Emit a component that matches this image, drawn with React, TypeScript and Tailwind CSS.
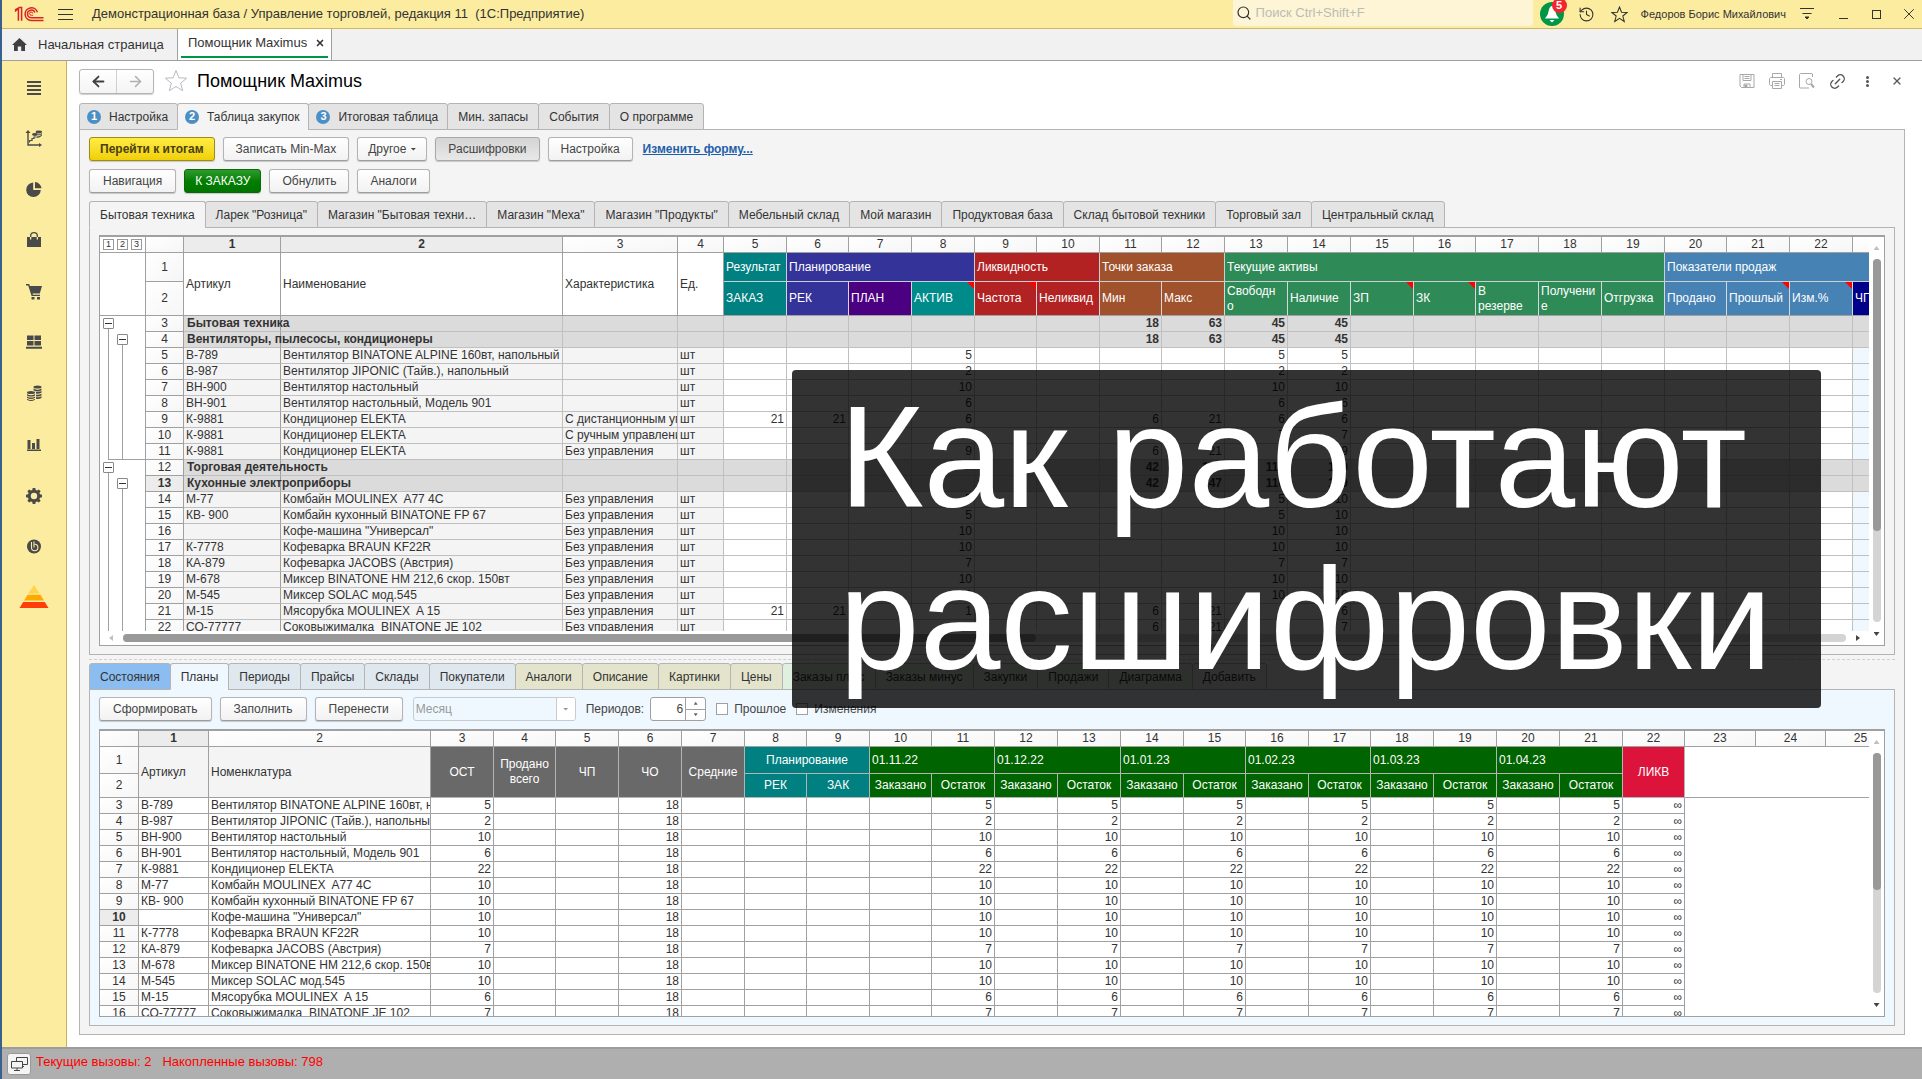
import React from 'react';
import { ArrowLeft, ArrowRight, History, Link2, Search, Star, X } from 'lucide-react';
import clsx from 'clsx';

const mainTabs = [
  { title: 'Настройка', num: 1 },
  { title: 'Таблица закупок', num: 2, active: true },
  { title: 'Итоговая таблица', num: 3 },
  { title: 'Мин. запасы' },
  { title: 'События' },
  { title: 'О программе' },
];

const storeTabs = [
  'Бытовая техника',
  'Ларек "Розница"',
  'Магазин "Бытовая техни…',
  'Магазин "Меха"',
  'Магазин "Продукты"',
  'Мебельный склад',
  'Мой магазин',
  'Продуктовая база',
  'Склад бытовой техники',
  'Торговый зал',
  'Центральный склад',
];

const detailTabs = [
  { title: 'Состояния', color: 'bg-[#8bbdf0]' },
  { title: 'Планы', color: 'bg-[#eff7ff]', active: true },
  { title: 'Периоды', color: 'bg-[#dfe7ef]' },
  { title: 'Прайсы', color: 'bg-[#dfe7ef]' },
  { title: 'Склады', color: 'bg-[#dfe7ef]' },
  { title: 'Покупатели', color: 'bg-[#dfe7ef]' },
  { title: 'Аналоги', color: 'bg-[#e4e4cc]' },
  { title: 'Описание', color: 'bg-[#e4e4cc]' },
  { title: 'Картинки', color: 'bg-[#e4e4cc]' },
  { title: 'Цены', color: 'bg-[#e4e4cc]' },
  { title: 'Заказы плюс', color: 'bg-[#e0f0e0]' },
  { title: 'Заказы минус', color: 'bg-[#e0f0e0]' },
  { title: 'Закупки', color: 'bg-[#e0f0e0]' },
  { title: 'Продажи', color: 'bg-[#e0f0e0]' },
  { title: 'Диаграмма', color: 'bg-[#e0f0e0]' },
  { title: 'Добавить', color: 'bg-[#f0f0f0]' },
];

// widths of spreadsheet columns, row number column first
const orderCols = [38, 97, 282, 115, 46, 63, 62, 63, 63, 62, 63, 62, 63, 63, 63, 63, 62, 63, 63, 63, 62, 63, 63, 63];
const planCols = [39, 70, 222, 63, 62, 63, 63, 63, 62, 63, 62, 63, 63, 63, 63, 62, 63, 62, 63, 63, 63, 63, 62, 71, 70, 70];

const orderGroups = [
  { title: 'Результат', span: 1, color: 'bg-[#008080]' },
  { title: 'Планирование', span: 3, color: 'bg-[#333399]' },
  { title: 'Ликвидность', span: 2, color: 'bg-[#b22222]' },
  { title: 'Точки заказа', span: 2, color: 'bg-[#a0522d]' },
  { title: 'Текущие активы', span: 7, color: 'bg-[#2e8b57]' },
  { title: 'Показатели продаж', span: 4, color: 'bg-[#4682b4]' },
];

const orderHeads = [
  { title: 'ЗАКАЗ', color: 'bg-[#008080]' },
  { title: 'РЕК', color: 'bg-[#333399]' },
  { title: 'ПЛАН', color: 'bg-[#4b0082]' },
  { title: 'АКТИВ', color: 'bg-[#008b8b]', note: true },
  { title: 'Частота', color: 'bg-[#b22222]', note: true },
  { title: 'Неликвид', color: 'bg-[#b22222]' },
  { title: 'Мин', color: 'bg-[#a0522d]' },
  { title: 'Макс', color: 'bg-[#a0522d]' },
  { title: 'Свободн\nо', color: 'bg-[#2e8b57]' },
  { title: 'Наличие', color: 'bg-[#2e8b57]' },
  { title: 'ЗП', color: 'bg-[#2e8b57]', note: true },
  { title: 'ЗК', color: 'bg-[#2e8b57]', note: true },
  { title: 'В\nрезерве', color: 'bg-[#2e8b57]' },
  { title: 'Получени\nе', color: 'bg-[#2e8b57]' },
  { title: 'Отгрузка', color: 'bg-[#2e8b57]' },
  { title: 'Продано', color: 'bg-[#4682b4]' },
  { title: 'Прошлый', color: 'bg-[#4682b4]', note: true },
  { title: 'Изм.%', color: 'bg-[#4682b4]', note: true },
  { title: 'ЧП', color: 'bg-[#00008b]' },
];

type OrderRow = {
  group?: boolean;
  outline: string;
  text: string[];
  values: Record<number, number>;
};

const item = (text: string[], values: Record<number, number>, outline = 'll'): OrderRow => ({ outline, text, values });

const orderRows: OrderRow[] = [
  { group: true, outline: 'b', text: ['Бытовая техника'], values: { 11: 18, 12: 63, 13: 45, 14: 45 } },
  { group: true, outline: 'lb', text: ['Вентиляторы, пылесосы, кондиционеры'], values: { 11: 18, 12: 63, 13: 45, 14: 45 } },
  item(['B-789', 'Вентилятор BINATONE ALPINE 160вт, напольный', '', 'шт'], { 8: 5, 13: 5, 14: 5 }),
  item(['B-987', 'Вентилятор JIPONIC (Тайв.), напольный', '', 'шт'], { 8: 2, 13: 2, 14: 2 }),
  item(['ВН-900', 'Вентилятор настольный', '', 'шт'], { 8: 10, 13: 10, 14: 10 }),
  item(['ВН-901', 'Вентилятор настольный, Модель 901', '', 'шт'], { 8: 6, 13: 6, 14: 6 }),
  item(['К-9881', 'Кондиционер ELEKTA', 'С дистанционным управлением', 'шт'], { 5: 21, 6: 21, 8: 6, 11: 6, 12: 21, 13: 6, 14: 6 }),
  item(['К-9881', 'Кондиционер ELEKTA', 'С ручным управлением', 'шт'], { 8: 7, 11: 6, 12: 21, 13: 7, 14: 7 }),
  item(['К-9881', 'Кондиционер ELEKTA', 'Без управления', 'шт'], { 8: 9, 11: 6, 12: 21, 13: 9, 14: 9 }, 'lle'),
  { group: true, outline: 'b', text: ['Торговая деятельность'], values: { 11: 42, 12: 147, 13: 110, 14: 160 } },
  { group: true, outline: 'lb', text: ['Кухонные электроприборы'], values: { 11: 42, 12: 147, 13: 110, 14: 160 } },
  item(['М-77', 'Комбайн MOULINEX  A77 4C', 'Без управления', 'шт'], { 8: 5, 13: 5, 14: 10 }),
  item(['КВ- 900', 'Комбайн кухонный BINATONE FP 67', 'Без управления', 'шт'], { 8: 5, 13: 5, 14: 10 }),
  item(['', 'Кофе-машина "Универсал"', 'Без управления', 'шт'], { 8: 10, 13: 10, 14: 10 }),
  item(['К-7778', 'Кофеварка BRAUN KF22R', 'Без управления', 'шт'], { 8: 10, 13: 10, 14: 10 }),
  item(['КА-879', 'Кофеварка JACOBS (Австрия)', 'Без управления', 'шт'], { 8: 7, 13: 7, 14: 7 }),
  item(['М-678', 'Миксер BINATONE HM 212,6 скор. 150вт', 'Без управления', 'шт'], { 8: 10, 13: 10, 14: 10 }),
  item(['М-545', 'Миксер SOLAC мод.545', 'Без управления', 'шт'], { 8: 10, 13: 10, 14: 10 }),
  item(['М-15', 'Мясорубка MOULINEX  A 15', 'Без управления', 'шт'], { 5: 21, 6: 21, 8: 1, 11: 6, 12: 21, 13: 1, 14: 6 }),
  item(['СО-77777', 'Соковыжималка  BINATONE JE 102', 'Без управления', 'шт'], { 8: 7, 11: 6, 12: 21, 13: 7, 14: 7 }),
];

const planRows: [string, string, number][] = [
  ['B-789', 'Вентилятор BINATONE ALPINE 160вт, напольный', 5],
  ['B-987', 'Вентилятор JIPONIC (Тайв.), напольный', 2],
  ['ВН-900', 'Вентилятор настольный', 10],
  ['ВН-901', 'Вентилятор настольный, Модель 901', 6],
  ['К-9881', 'Кондиционер ELEKTA', 22],
  ['М-77', 'Комбайн MOULINEX  A77 4C', 10],
  ['КВ- 900', 'Комбайн кухонный BINATONE FP 67', 10],
  ['', 'Кофе-машина "Универсал"', 10],
  ['К-7778', 'Кофеварка BRAUN KF22R', 10],
  ['КА-879', 'Кофеварка JACOBS (Австрия)', 7],
  ['М-678', 'Миксер BINATONE HM 212,6 скор. 150вт', 10],
  ['М-545', 'Миксер SOLAC мод.545', 10],
  ['М-15', 'Мясорубка MOULINEX  A 15', 6],
  ['СО-77777', 'Соковыжималка  BINATONE JE 102', 7],
];

const planDates = ['01.11.22', '01.12.22', '01.01.23', '01.02.23', '01.03.23', '01.04.23'];

const sum = (list: number[]) => list.reduce((a, b) => a + b, 0);

type ButtonProps = { children: React.ReactNode; look?: string; pad?: string };

const Button = ({
  children,
  look = 'border-[#b4b4b4] border-b-[#9c9c9c] bg-linear-to-b from-white to-[#f2f2f2] text-[#444]',
  pad = 'px-3',
}: ButtonProps) => (
  <button type="button" className={clsx('flex h-6 items-center rounded-[3px] border text-xs whitespace-nowrap shadow-[0_1px_1px_#00000030]', look, pad)}>
    {children}
  </button>
);

type TabProps = { title: string; num?: number; active?: boolean; color?: string };

const Tab = ({ title, num, active, color }: TabProps) => (
  <button
    type="button"
    role="tab"
    aria-selected={!!active}
    className={clsx(
      'relative -mr-px flex h-[27px] items-center rounded-t-[3px] border border-[#b4b4b4] text-xs whitespace-nowrap text-[#333]',
      num ? 'gap-2 pr-[9px] pl-[7px]' : 'px-[10px]',
      active && 'border-b-transparent',
      color ?? (active ? 'bg-[#f4f4f4]' : 'bg-[#e4e4e4]'),
    )}
  >
    {num && <span className="flex size-[14px] items-center justify-center rounded-full bg-[#4b90c4] text-[11px] leading-none font-bold text-white">{num}</span>}
    {title}
  </button>
);

const Logo = () => (
  <svg width="30" height="16" viewBox="0 0 30 16" fill="none" stroke="#dd2127" strokeWidth="1.5" aria-label="1С">
    <path d="M1 5.500 4.400 2.200v12.600M7.600 14.800V1.600H5.600L1 4" />
    <path d="M23.400 6.200A6.300 6.300 0 1 0 17.200 14.400H29.500" />
    <path d="M20.900 6.600A3.800 3.800 0 1 0 17.200 11.700H29.500" />
    <path d="M18.800 7.400a1.600 1.600 0 1 0-1.600 1.800h2" strokeWidth="1" />
  </svg>
);

const sideIcons = [
  <path key="0" d="M3 4h14v2H3zM3 8h14v2H3zM3 12h14v2H3zM3 16h14v2H3z" />,
  <g key="1">
    <path d="M4 2l2.500 3H4.700v11.300H15V15l3 2-3 2v-1.300H3.300V5h-1.800z" />
    <path d="M5.500 14.500v-2H8v-2h2V9h2" fill="none" stroke="#4a4a4a" strokeWidth="1.200" />
    <ellipse cx="14.800" cy="4" rx="3.200" ry="1.400" />
    <ellipse cx="11" cy="6.500" rx="3" ry="1.400" />
    <path d="M12.500 8.500q4 0 5.500-2.500v1.500q-1.500 2.300-5.500 2.500zM14 6.500q2.500-.3 4-1.500v.8q-1.500 1.500-4 1.700z" />
  </g>,
  <path key="2" d="M9.200 3.500v7.600h7.600A7.300 7.300 0 1 1 9.200 3.500zM11 3a7 7 0 0 1 6.500 6.300H11z" />,
  <path key="3" fillRule="evenodd" d="M3 7h14v10H3zM6 9.500V6a4 4 0 0 1 8 0v3.500h-1.300V6a2.700 2.700 0 0 0-5.400 0v3.500z" />,
  <path key="4" d="M2 3h3.200l.7 2H18l-2.200 7.500H8.500l.4 1.200H16V15H7.600L4.200 4.500H2zM7.500 16h3v2.500h-3zM13 16h3v2.500h-3z" />,
  <path key="5" d="M3 3.500h6.500V8H3zM10.500 3.500H17V8h-6.500zM3 9h6.500v4.500H3zM10.500 9H17v4.500h-6.500zM2 14.800h16v2H2z" />,
  <g key="6">
    <ellipse cx="13.500" cy="4" rx="4" ry="1.500" />
    <path d="M9.500 5.500q4 2.400 8 0v1.700q-4 2.400-8 0zM12 8.900q3 .6 5.500-.8v1.700q-3 1.500-5.500.8zM12 11.500q3 .6 5.500-.8v1.700q-3 1.500-5.500.8zM12 14.100q3 .6 5.500-.8V15q-3 1.500-5.500.8z" />
    <ellipse cx="7" cy="9.500" rx="4" ry="1.500" />
    <path d="M3 11q4 2.400 8 0v1.400q-4 2.400-8 0zM3 13.400q4 2.400 8 0v1.400q-4 2.400-8 0zM3 15.800q4 2.400 8 0v.9q-4 2.400-8 0z" />
  </g>,
  <path key="7" d="M3.500 6h3v9h-3zM8 9h3v6H8zM12.500 5h3v10h-3zM3 15.500h14V17H3z" />,
  <path key="8" fillRule="evenodd" d="M8.700 3h2.600l.4 2 1.400.6 1.700-1.200 1.800 1.800-1.200 1.700.6 1.400 2 .4v2.600l-2 .4-.6 1.400 1.200 1.700-1.800 1.800-1.700-1.200-1.400.6-.4 2H8.700l-.4-2-1.400-.6-1.700 1.200-1.800-1.800 1.200-1.700-.6-1.400-2-.4V9.700l2-.4.6-1.400-1.200-1.700 1.800-1.800 1.700 1.200L8.300 5zM10 7.800a3.200 3.200 0 1 0 0 6.400 3.200 3.200 0 0 0 0-6.400z" />,
  <g key="9">
    <circle cx="10" cy="10.500" r="7" />
    <path d="M7.500 6v5.500a3.200 3.200 0 1 0 3.200-3.200M10 5.500v6" fill="none" stroke="#fbec9f" strokeWidth="1.100" />
  </g>,
];

const SideBar = () => (
  <nav className="flex w-[65px] shrink-0 flex-col border-r border-[#c6b35c] bg-[#fbec9f]">
    {sideIcons.map((icon, i) => (
      <a key={i} href="#" className="flex h-[51px] items-center justify-center">
        <svg width="20" height="20" viewBox="0 0 20 20" fill="#4a4a4a">{icon}</svg>
      </a>
    ))}
    <a href="#" className="flex h-[51px] items-center justify-center">
      <svg width="30" height="24" viewBox="0 0 30 24">
        <path d="M15 0l5.600 8.500H9.400z" fill="#ffd34d" />
        <path d="M8.600 9.800h12.800l3.600 5.600H5z" fill="#ffa800" />
        <path d="M4.200 17h21.600L29.500 23H.5z" fill="#ff3d0a" />
      </svg>
    </a>
  </nav>
);

const TitleBar = () => (
  <header className="flex h-[29px] shrink-0 items-center border-b border-[#cdb765] bg-[#fbec9f] text-[#333]">
    <div className="ml-3 flex items-center gap-[14px]">
      <Logo />
      <button type="button" aria-label="Меню" className="flex w-[15px] flex-col gap-1">
        <span className="h-px bg-[#333]" />
        <span className="h-px bg-[#333]" />
        <span className="h-px bg-[#333]" />
      </button>
    </div>
    <h1 className="ml-[19px] text-[13px] whitespace-pre">Демонстрационная база / Управление торговлей, редакция 11  (1С:Предприятие)</h1>
    <label className="mr-[7px] mb-[2px] ml-auto flex h-[26px] w-[300px] items-center gap-1 rounded-b-[3px] bg-[#fdf5d6] pl-[3px]">
      <Search size={16} strokeWidth={1.800} />
      <input type="text" aria-label="Поиск" placeholder="Поиск Ctrl+Shift+F" className="w-60 bg-transparent text-[13px] outline-none placeholder:text-[#bcbcb4]" />
    </label>
    <button type="button" aria-label="Уведомления" className="relative mr-[11px] size-6">
      <svg width="24" height="24" viewBox="0 0 24 24">
        <circle cx="12" cy="12" r="12" fill="#009646" />
        <path d="M12 4c-2.500 0-3 4-4 7.500-.6 2-2 3.500-3 5h14c-1-1.500-2.400-3-3-5C15 8 14.500 4 12 4zM9.500 18h5L12 20.500z" fill="#fff" />
      </svg>
      <span className="absolute -top-1 -right-[3px] flex size-[15px] items-center justify-center rounded-full bg-[#f5242c] text-[11px] leading-none font-bold text-white">5</span>
    </button>
    <button type="button" aria-label="История" className="mr-[9px] flex size-6 items-center justify-center"><History size={17} strokeWidth={1.500} /></button>
    <button type="button" aria-label="Избранное" className="mr-[9px] flex size-6 items-center justify-center">
      <svg width="17" height="17" viewBox="0 0 24 24" fill="none" stroke="#333" strokeWidth="1.500"><path d="M12 1.500l2.900 7.300 7.800.4-6 5 2 7.600L12 17.500l-6.700 4.300 2-7.600-6-5 7.800-.4z" /></svg>
    </button>
    <a href="#" className="mr-[9px] text-[11px] whitespace-nowrap">Федоров Борис Михайлович</a>
    <button type="button" aria-label="Настройки" className="mr-3 flex size-6 items-center justify-center">
      <svg width="16" height="14" viewBox="0 0 16 14" fill="none" stroke="#333"><path d="M1 1.500h14M3.500 6.500h9" /><path d="M6 10h4L8 12z" fill="#333" /></svg>
    </button>
    <div className="flex gap-[9px] pr-px">
      <button type="button" aria-label="Свернуть" className="flex size-6 items-center justify-center"><span className="mt-2 h-px w-[9px] bg-[#333]" /></button>
      <button type="button" aria-label="Развернуть" className="flex size-6 items-center justify-center"><span className="size-[9px] border border-[#333]" /></button>
      <button type="button" aria-label="Закрыть" className="flex size-6 items-center justify-center"><X size={18} strokeWidth={1.300} /></button>
    </div>
  </header>
);

const WindowTabs = () => (
  <div className="flex h-8 shrink-0 border-b border-[#a0a0a0] bg-[#f1f1f1] text-[13px] text-[#333]">
    <a href="#" className="flex w-[175px] items-center gap-[11px] pl-[10px]">
      <svg width="15" height="13" viewBox="0 0 15 13" fill="#404040"><path d="M7.500 0 15 7h-2v6H9.200V8.500H5.800V13H2V7H0z" /></svg>
      Начальная страница
    </a>
    <div className="flex w-[155px] flex-col border-x border-[#a0a0a0] bg-white px-[3px]">
      <div className="flex flex-1 items-center justify-between pt-px pr-[3px] pl-[7px]">
        Помощник Maximus
        <button type="button" aria-label="Закрыть вкладку"><X size={10} strokeWidth={4} /></button>
      </div>
      <div className="mb-[2px] h-[2px] bg-[#009646]" />
    </div>
  </div>
);

const FormHeader = () => (
  <div className="flex h-6 items-center">
    <div className="flex h-[25px] w-[75px] rounded-[3px] border border-[#b4b4b4] bg-linear-to-b from-white to-[#f4f4f4] shadow-[0_1px_1px_#00000030]">
      <button type="button" aria-label="Назад" className="flex flex-1 items-center justify-center border-r border-[#d0d0d0]"><ArrowLeft size={17} strokeWidth={2.600} color="#404040" /></button>
      <button type="button" aria-label="Вперед" className="flex flex-1 items-center justify-center"><ArrowRight size={17} strokeWidth={2.300} color="#b0b0b0" /></button>
    </div>
    <button type="button" aria-label="В избранное" className="ml-[10px]">
      <svg width="24" height="24" viewBox="0 0 24 24" fill="none" stroke="#b4bcc4"><path d="M12 1.500l2.900 7.300 7.800.4-6 5 2 7.600L12 17.500l-6.700 4.300 2-7.600-6-5 7.800-.4z" /></svg>
    </button>
    <h2 className="ml-[9px] text-lg text-black">Помощник Maximus</h2>
    <div className="mr-[13px] ml-auto flex items-center gap-[6px]">
      <button type="button" aria-label="Сохранить" className="flex size-6 items-center justify-center">
        <svg width="16" height="16" viewBox="0 0 16 16" fill="none" stroke="#a8a8a8"><path d="M1 1.500h14v13H2.500L1 13zM4 1.500v6h8v-6M5.500 3.500h5M5.500 5.500h5M5 14.500v-3.500h6v3.500" /><path d="M6 12h2v2.500H6z" fill="#a8a8a8" /></svg>
      </button>
      <button type="button" aria-label="Печать" className="flex size-6 items-center justify-center">
        <svg width="16" height="16" viewBox="0 0 16 16" fill="none" stroke="#a8a8a8"><path d="M3.500 4.500v-4h9v4M3.500 12.500h-2l-1-1v-6l1-1h13l1 1v6l-1 1h-2M3.500 8.500h9v7h-9zM5.500 10.500h5M5.500 12.500h5M11 6.500h2" /></svg>
      </button>
      <button type="button" aria-label="Просмотр" className="flex size-6 items-center justify-center">
        <svg width="16" height="16" viewBox="0 0 16 16" fill="none" stroke="#a8a8a8"><path d="M13.500 4V1l-.5-.5H1.500l-1 1v13l.5.5H10" /><circle cx="10" cy="8.500" r="3" /><path d="M12 11l3 3.500" strokeWidth="2" /></svg>
      </button>
      <button type="button" aria-label="Ссылка" className="flex size-6 items-center justify-center"><Link2 size={19} strokeWidth={1.700} color="#555" className="-rotate-45" /></button>
      <button type="button" aria-label="Еще" className="flex size-6 flex-col items-center justify-center gap-px">
        <span className="size-[3px] rounded-full bg-[#555]" />
        <span className="size-[3px] rounded-full bg-[#555]" />
        <span className="size-[3px] rounded-full bg-[#555]" />
      </button>
      <button type="button" aria-label="Закрыть форму" className="flex size-6 items-center justify-center"><X size={12} strokeWidth={2.400} color="#555" /></button>
    </div>
  </div>
);

const Columns = ({ widths }: { widths: number[] }) => (
  <colgroup>
    {widths.map((w, i) => (
      <col key={i} style={{ width: w }} />
    ))}
  </colgroup>
);

const gutter = 'border-r border-b border-[#a0a0a0] bg-linear-to-br from-white to-[#f6f6f6] p-0 text-center font-normal';
const marked = 'border-r border-b border-[#a0a0a0] bg-[#ececec] p-0 text-center font-bold';

const ColumnNumbers = ({ count, active }: { count: number; active: number[] }) => (
  <>
    <th className={clsx(gutter, 'h-[15px]')} />
    {Array.from({ length: count }, (_, i) => (
      <th key={i} scope="col" className={active.includes(i + 1) ? marked : gutter}>{i + 1}</th>
    ))}
  </>
);

const Fold = () => (
  <button type="button" aria-label="Свернуть группу" className="mt-[2px] flex size-[11px] shrink-0 items-center justify-center rounded-[1px] border border-[#888] bg-white">
    <span className="h-px w-[7px] bg-[#333]" />
  </button>
);

const Outline = ({ kind }: { kind: string }) => (
  <td className="relative border-r border-[#a0a0a0] bg-white p-0 pl-px">
    <div className="flex h-4">
      {kind.replace('e', '').split('').map((mark, i) => (
        <div key={i} className="flex w-[14px] flex-col items-center">
          {mark === 'b' && <Fold />}
          <span className="w-px flex-1 bg-[#a0a0a0]" />
        </div>
      ))}
    </div>
    {kind.endsWith('e') && <span className="absolute right-0 bottom-0 left-2 h-px bg-[#a0a0a0]" />}
  </td>
);

const OrderTable = () => (
  <table className="table-fixed border-separate border-spacing-0 text-xs leading-[15px] text-[#333]" style={{ width: 46 + sum(orderCols) }}>
    <Columns widths={[46, ...orderCols]} />
    <thead>
      <tr>
        <td className="border-r border-b border-[#a0a0a0] bg-white p-0 pl-[3px]">
          <div className="flex gap-[3px]">
            {[1, 2, 3].map((n) => (
              <button key={n} type="button" className="flex size-[11px] items-center justify-center border border-[#999] text-[9px] leading-none">{n}</button>
            ))}
          </div>
        </td>
        <ColumnNumbers count={23} active={[1, 2]} />
      </tr>
      <tr>
        <td rowSpan={2} className="border-r border-b border-[#a0a0a0] bg-white p-0" />
        <th scope="row" className={clsx(gutter, 'h-[29px]')}>1</th>
        {['Артикул', 'Наименование', 'Характеристика', 'Ед.'].map((title) => (
          <th key={title} rowSpan={2} scope="col" className="border-r border-b border-[#a0a0a0] bg-white p-0 pl-[2px] text-left font-normal">{title}</th>
        ))}
        {orderGroups.map((g) => (
          <th key={g.title} colSpan={g.span} scope="colgroup" className={clsx('border-r border-b border-[#c8d0d4] p-0 pl-[2px] text-left font-normal text-white', g.color)}>{g.title}</th>
        ))}
      </tr>
      <tr>
        <th scope="row" className={clsx(gutter, 'h-[34px]')}>2</th>
        {orderHeads.map((h) => (
          <th key={h.title} scope="col" className={clsx('relative border-r border-b border-r-[#d8d8d8] border-b-[#a0a0a0] p-0 pl-[2px] text-left font-normal whitespace-pre text-white', h.color)}>
            {h.title}
            {h.note && <span className="absolute top-0 right-0 size-[7px] bg-[#ff0000] [clip-path:polygon(0_0,100%_0,100%_100%)]" />}
          </th>
        ))}
      </tr>
    </thead>
    <tbody>
      {orderRows.map((row, r) => (
        <tr key={r}>
          <Outline kind={row.outline} />
          <th scope="row" className={clsx(r === 10 ? marked : gutter, 'h-4')}>{r + 3}</th>
          {[0, 1, 2, 3].map((c) => (
            <td
              key={c}
              className={clsx(
                'border-r border-b border-[#c0c0c0] p-0 whitespace-pre',
                row.group ? 'bg-[#dbdbdb] pl-[3px] font-bold' : 'overflow-hidden bg-[#f4f4f4] pl-[2px]',
                c === 0 && 'border-r-[#a0a0a0]',
              )}
            >
              {row.text[c]}
            </td>
          ))}
          {orderHeads.map((_, c) => (
            <td
              key={c}
              className={clsx(
                'border-r border-b border-[#c0c0c0] p-0 pr-[2px] text-right',
                row.group ? 'bg-[#dbdbdb] font-bold' : c === 18 ? 'bg-[#eff7ff]' : 'bg-white',
              )}
            >
              {row.values[c + 5]}
            </td>
          ))}
        </tr>
      ))}
    </tbody>
  </table>
);

const planHead = 'border-r border-b border-[#b4b4b4] p-0 font-normal text-white';

const PlanTable = () => (
  <table className="table-fixed border-separate border-spacing-0 text-xs leading-[15px] text-[#333]" style={{ width: sum(planCols) }}>
    <Columns widths={planCols} />
    <thead>
      <tr>
        <ColumnNumbers count={25} active={[1]} />
      </tr>
      <tr>
        <th scope="row" className={clsx(gutter, 'h-[27px]')}>1</th>
        {['Артикул', 'Номенклатура'].map((title) => (
          <th key={title} rowSpan={2} scope="col" className="border-r border-b border-[#a0a0a0] bg-[#f4f4f4] p-0 pl-[2px] text-left font-normal">{title}</th>
        ))}
        {['ОСТ', 'Продано\nвсего', 'ЧП', 'ЧО', 'Средние'].map((title) => (
          <th key={title} rowSpan={2} scope="col" className={clsx(planHead, 'bg-[#696969] text-center whitespace-pre')}>{title}</th>
        ))}
        <th colSpan={2} scope="colgroup" className={clsx(planHead, 'bg-[#008080] text-center')}>Планирование</th>
        {planDates.map((date) => (
          <th key={date} colSpan={2} scope="colgroup" className={clsx(planHead, 'bg-[#006400] pl-[2px] text-left')}>{date}</th>
        ))}
        <th rowSpan={2} scope="col" className={clsx(planHead, 'bg-[#dc143c] text-center')}>ЛИКВ</th>
        <td rowSpan={2} colSpan={3} className="border-b border-[#a0a0a0] bg-white p-0" />
      </tr>
      <tr>
        <th scope="row" className={clsx(gutter, 'h-6')}>2</th>
        {['РЕК', 'ЗАК'].map((title) => (
          <th key={title} scope="col" className={clsx(planHead, 'bg-[#008080] text-center')}>{title}</th>
        ))}
        {planDates.map((date) => (
          <React.Fragment key={date}>
            <th scope="col" className={clsx(planHead, 'bg-[#006400] text-center')}>Заказано</th>
            <th scope="col" className={clsx(planHead, 'bg-[#006400] text-center')}>Остаток</th>
          </React.Fragment>
        ))}
      </tr>
    </thead>
    <tbody>
      {planRows.map(([code, name, rest], r) => (
        <tr key={r}>
          <th scope="row" className={clsx(r === 7 ? marked : gutter, 'h-4')}>{r + 3}</th>
          <td className="overflow-hidden border-r border-b border-[#a0a0a0] p-0 pl-[2px] whitespace-pre">{code}</td>
          <td className="overflow-hidden border-r border-b border-[#a0a0a0] p-0 pl-[2px] whitespace-pre">{name}</td>
          {Array.from({ length: 19 }, (_, i) => {
            const col = i + 3;
            const isRest = col === 3 || (col > 10 && col % 2 === 1);
            return (
              <td key={col} className="border-r border-b border-[#a0a0a0] p-0 pr-[2px] text-right">
                {isRest ? rest : col === 6 ? 18 : null}
              </td>
            );
          })}
          <td className="border-r border-b border-[#a0a0a0] p-0 pr-[2px] text-right">∞</td>
          <td colSpan={3} className="p-0" />
        </tr>
      ))}
    </tbody>
  </table>
);

const VerticalBar = ({ thumb }: { thumb: string }) => (
  <div className="flex w-[15px] shrink-0 flex-col items-center bg-white py-[9px]">
    <span className="h-1 w-[6px] bg-[#c0c0c0] [clip-path:polygon(50%_0,100%_100%,0_100%)]" />
    <div className="mt-[9px] mb-[10px] w-2 flex-1 rounded-full bg-[#d4d4d4]">
      <div className={clsx('rounded-full bg-[#999]', thumb)} />
    </div>
    <span className="h-1 w-[6px] bg-[#444] [clip-path:polygon(0_0,100%_0,50%_100%)]" />
  </div>
);

const HorizontalBar = () => (
  <div className="flex h-[14px] items-center bg-white px-[9px]">
    <span className="h-[6px] w-1 bg-[#c0c0c0] [clip-path:polygon(0_50%,100%_0,100%_100%)]" />
    <div className="mx-[10px] h-2 flex-1 rounded-full bg-[#d4d4d4]">
      <div className="h-2 w-[53%] rounded-full bg-[#999]" />
    </div>
    <span className="h-[6px] w-1 bg-[#444] [clip-path:polygon(0_0,100%_50%,0_100%)]" />
  </div>
);

const PlanToolbar = () => (
  <div className="flex items-center gap-2 text-xs text-[#444]">
    <Button pad="px-[13px]">Сформировать</Button>
    <Button pad="px-[13px]">Заполнить</Button>
    <Button pad="px-[13px]">Перенести</Button>
    <div className="relative ml-[2px]">
      <select disabled aria-label="Период" className="h-6 w-[163px] appearance-none rounded-[3px] border border-[#c8ccd0] bg-[#eff7ff] pl-[2px] text-[#999]">
        <option>Месяц</option>
      </select>
      <span className="pointer-events-none absolute top-px right-px flex h-[22px] w-[19px] items-center justify-center rounded-r-[2px] border-l border-[#c8ccd0] bg-white">
        <span className="h-[3px] w-[6px] bg-[#999] [clip-path:polygon(0_0,100%_0,50%_100%)]" />
      </span>
    </div>
    <label htmlFor="periods" className="ml-[2px]">Периодов:</label>
    <div className="-ml-[2px] flex h-6 w-14 rounded-[3px] border border-[#a0a0a0] bg-white">
      <input id="periods" type="text" defaultValue="6" className="w-[34px] pr-[2px] text-right outline-none" />
      <div className="flex flex-1 flex-col border-l border-[#a0a0a0]">
        <button type="button" aria-label="Больше" className="flex flex-1 items-center justify-center border-b border-[#a0a0a0]">
          <span className="h-[3px] w-1 bg-[#666] [clip-path:polygon(50%_0,100%_100%,0_100%)]" />
        </button>
        <button type="button" aria-label="Меньше" className="flex flex-1 items-center justify-center">
          <span className="h-[3px] w-1 bg-[#666] [clip-path:polygon(0_0,100%_0,50%_100%)]" />
        </button>
      </div>
    </div>
    <label className="ml-[2px] flex items-center gap-[6px]">
      <input type="checkbox" className="size-3 appearance-none border border-[#a0a0a0] bg-white" />
      Прошлое
    </label>
    <label className="ml-[2px] flex items-center gap-[6px]">
      <input type="checkbox" className="size-3 appearance-none border border-[#a0a0a0] bg-white" />
      Изменения
    </label>
  </div>
);

const StatusBar = () => (
  <footer className="flex h-8 shrink-0 items-start gap-[5px] border-t-2 border-[#9c9c9c] bg-[#afafaf] pt-1 pl-[5px]">
    <button type="button" aria-label="Окна" className="flex h-[22px] w-6 items-center justify-center rounded-[3px] border border-[#999] bg-[#f4f4f4]">
      <svg width="17" height="14" viewBox="0 0 17 14" fill="#f4f4f4" stroke="#444"><path d="M5.500.5h11v7h-11zM9 9.500h4" /><path d="M.5 4.500h11v6.500H.5zM6 11v2M3 13.500h6" /></svg>
    </button>
    <p className="text-[13px] leading-[17px] whitespace-pre text-[#ff0000]">Текущие вызовы: 2   Накопленные вызовы: 798</p>
  </footer>
);

const App = () => {
  return (
    <div className="relative flex h-screen flex-col overflow-hidden border-l-2 border-[#3a6090] bg-white font-['Liberation_Sans',Arial,sans-serif]">
      <TitleBar />
      <WindowTabs />

      <div className="flex min-h-0 flex-1">
        <SideBar />

        <main className="flex min-w-0 flex-1 flex-col pt-2 pb-3 pl-3">
          <FormHeader />

          <div role="tablist" className="z-10 mt-[10px] -mb-px flex">
            {mainTabs.map((tab) => (
              <Tab key={tab.title} {...tab} />
            ))}
          </div>

          <section className="mr-[17px] flex min-h-0 flex-1 flex-col border border-[#b4b4b4] bg-[#f4f4f4] px-[9px] pt-[7px] pb-2">
            <div className="flex items-center gap-2">
              <Button pad="px-[10px]" look="border-[#a08c10] bg-linear-to-b from-[#ffec40] to-[#f0d000] font-bold text-[#4a4010]">Перейти к итогам</Button>
              <Button>Записать Min-Max</Button>
              <Button pad="px-[10px]">
                Другое
                <span className="ml-1 h-[3px] w-[6px] bg-[#444] [clip-path:polygon(0_0,100%_0,50%_100%)]" />
              </Button>
              <Button look="border-[#a8a8a8] bg-linear-to-b from-[#d4d4d4] to-[#e8e8e8] text-[#444]">Расшифровки</Button>
              <Button>Настройка</Button>
              <a href="#" className="ml-[2px] text-xs font-bold text-[#1f5faa] underline">Изменить форму...</a>
            </div>
            <div className="mt-2 flex items-center gap-2">
              <Button pad="px-[13px]">Навигация</Button>
              <Button pad="px-[10px]" look="border-[#0a6a0a] bg-linear-to-b from-[#2c9a2c] via-[#008000] to-[#007400] text-white">К ЗАКАЗУ</Button>
              <Button>Обнулить</Button>
              <Button>Аналоги</Button>
            </div>

            <div role="tablist" className="z-10 mt-2 -mb-px flex">
              {storeTabs.map((title, i) => (
                <Tab key={title} title={title} active={i === 0} />
              ))}
            </div>
            <div className="border border-[#b4b4b4] px-[9px] pt-[7px] pb-2">
              <div className="flex border border-t-2 border-[#a0a0a0] bg-white">
                <div className="min-w-0 flex-1">
                  <div className="h-[394px] overflow-hidden">
                    <OrderTable />
                  </div>
                  <HorizontalBar />
                </div>
                <VerticalBar thumb="h-[75%]" />
              </div>
            </div>

            <div className="h-2 pt-1">
              <div className="border-t border-dashed border-[#d0d0d0]" />
            </div>

            <div role="tablist" className="z-10 -mb-px flex">
              {detailTabs.map((tab) => (
                <Tab key={tab.title} {...tab} />
              ))}
            </div>
            <div className="flex min-h-0 flex-1 flex-col border border-[#b4b4b4] bg-[#eff7ff] px-[9px] pt-[7px] pb-2">
              <PlanToolbar />
              <div className="mt-2 flex min-h-0 flex-1 border border-t-2 border-[#a0a0a0] bg-white">
                <div className="min-w-0 flex-1 overflow-hidden">
                  <PlanTable />
                </div>
                <VerticalBar thumb="h-[57%]" />
              </div>
            </div>
          </section>
        </main>
      </div>

      <StatusBar />

      <div className="absolute top-[370px] left-[790px] z-20 w-[1029px] rounded-[4px] bg-black/80 pt-[6px] pb-2 pl-[47px] text-[145px] leading-[162px] whitespace-nowrap text-white">
        Как работают
        <br />
        расшифровки
      </div>
    </div>
  );
};

export default App;
